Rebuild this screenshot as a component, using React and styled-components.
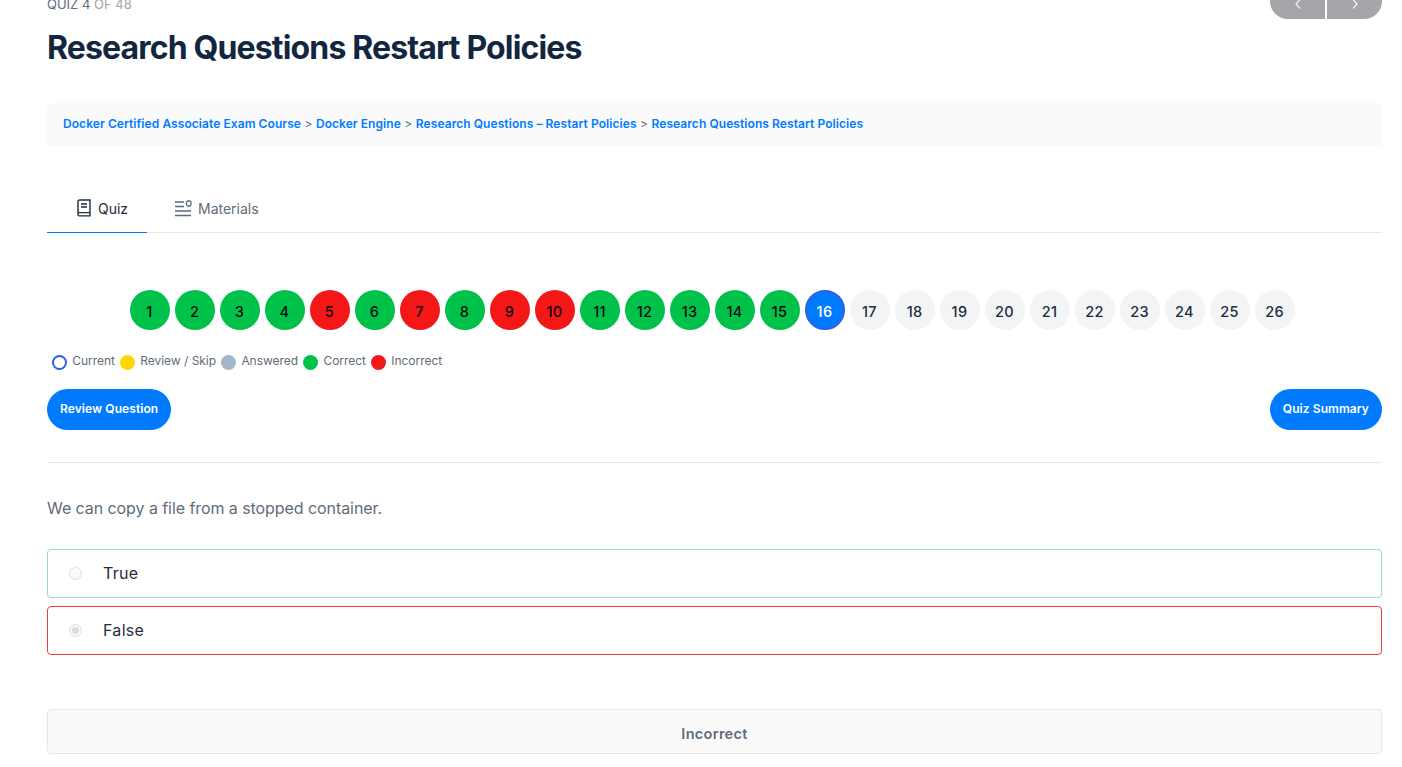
import React from "react";
import styled, { createGlobalStyle } from "styled-components";

const GlobalStyle = createGlobalStyle`
  html, body {
    margin: 0;
    padding: 0;
    background: #fff;
    overflow: hidden;
    font-family: Inter, "Liberation Sans", sans-serif;
  }
  * {
    box-sizing: border-box;
  }
`;

const statusList = [
  "correct", "correct", "correct", "correct", "incorrect", "correct", "incorrect", "correct",
  "incorrect", "incorrect", "correct", "correct", "correct", "correct", "correct", "current",
  "none", "none", "none", "none", "none", "none", "none", "none", "none", "none",
];

const legend = [
  { kind: "current", label: "Current" },
  { kind: "review", label: "Review / Skip" },
  { kind: "answered", label: "Answered" },
  { kind: "correct", label: "Correct" },
  { kind: "incorrect", label: "Incorrect" },
];

const crumbs = [
  "Docker Certified Associate Exam Course",
  "Docker Engine",
  "Research Questions – Restart Policies",
  "Research Questions Restart Policies",
];

const BookIcon = () => (
  <svg width="16" height="18" viewBox="0 0 16 18" fill="none" stroke="#1f2d3d" strokeWidth="1.4">
    <path d="M2 14.5V2.6C2 1.700 2.700 1 3.600 1H14v12.600H3.400C2.600 13.600 2 14.200 2 15s.6 1.900 1.400 1.900H14v-3.300" />
    <path d="M5 5h6M5 8h6" />
  </svg>
);

const MaterialsIcon = () => (
  <svg width="18" height="17" viewBox="0 0 18 17" fill="none" stroke="#5a6778" strokeWidth="1.3">
    <path d="M1 2h9M1 6.500h9M1 11h16M1 15.500h16" />
    <rect x="12.500" y="1" width="4.500" height="5" rx="1.500" />
  </svg>
);

const Chevron = ({ d }) => (
  <svg width="6" height="10" viewBox="0 0 6 10" fill="none" stroke="#f0f4fa" strokeWidth="1.2">
    <path d={d} />
  </svg>
);

const App = () => {
  return (
    <Page>
      <GlobalStyle />
      <Header>
        <QuizCount>
          QUIZ 4 <span>OF 48</span>
        </QuizCount>
        <NavGroup>
          <NavButton $side="left">
            <Chevron d="M5 0.500 1 5l4 4.500" />
          </NavButton>
          <NavButton $side="right">
            <Chevron d="M1 0.500 5 5 1 9.500" />
          </NavButton>
        </NavGroup>
      </Header>
      <Title>Research Questions Restart Policies</Title>

      <Breadcrumb>
        {crumbs.map((crumb, i) => (
          <React.Fragment key={crumb}>
            {i > 0 && <Sep> &gt; </Sep>}
            <Crumb>{crumb}</Crumb>
          </React.Fragment>
        ))}
      </Breadcrumb>

      <Tabs>
        <Tab $active>
          <BookIcon />
          Quiz
        </Tab>
        <Tab>
          <MaterialsIcon />
          Materials
        </Tab>
      </Tabs>

      <Numbers>
        {statusList.map((status, i) => (
          <NumberDot key={i} $status={status}>
            {i + 1}
          </NumberDot>
        ))}
      </Numbers>

      <Legend>
        {legend.map((item) => (
          <LegendItem key={item.kind}>
            <LegendDot $kind={item.kind} />
            <LegendLabel>{item.label}</LegendLabel>
          </LegendItem>
        ))}
      </Legend>

      <Actions>
        <PillButton>Review Question</PillButton>
        <PillButton>Quiz Summary</PillButton>
      </Actions>

      <Divider />

      <Question>We can copy a file from a stopped container.</Question>

      <Option $state="right">
        <Radio />
        True
      </Option>
      <Option $state="wrong">
        <Radio $checked />
        False
      </Option>

      <Result>Incorrect</Result>
    </Page>
  );
};

export default App;

const Page = styled.div`
  margin-top: -20px;
  padding: 0 20px 0 47px;
  width: 1402px;
`;

const Header = styled.div`
  display: flex;
  justify-content: space-between;
  align-items: flex-start;
  height: 39px;
`;

const QuizCount = styled.div`
  margin-top: 16px;
  font-size: 13px;
  line-height: 16px;
  color: #5f6b7a;

  span {
    color: #a5a6a9;
  }
`;

const NavGroup = styled.div`
  display: flex;
  gap: 2px;
`;

const NavButton = styled.div`
  width: 55px;
  height: 39px;
  padding-top: 19px;
  display: flex;
  justify-content: center;
  background: #a5a6a9;
  border-radius: ${(p) => (p.$side === "left" ? "0 0 0 18px" : "0 0 18px 0")};
`;

const Title = styled.h1`
  margin: 9px 0 0;
  font-size: 32px;
  line-height: 40px;
  font-weight: 700;
  letter-spacing: -0.85px;
  color: #12273f;
`;

const Breadcrumb = styled.div`
  margin-top: 35px;
  height: 43px;
  padding: 0 16px 2px;
  display: flex;
  align-items: center;
  white-space: pre;
  background: #fafafa;
  border-radius: 4px;
  font-size: 12px;
  letter-spacing: 0.07px;
`;

const Crumb = styled.span`
  color: #007bff;
  font-weight: 600;
`;

const Sep = styled.span`
  color: #5f6b7a;
`;

const Tabs = styled.div`
  margin-top: 40px;
  display: flex;
  height: 47px;
  border-bottom: 1px solid #e6e8eb;
`;

const Tab = styled.div`
  display: flex;
  align-items: center;
  gap: 6px;
  width: ${(p) => (p.$active ? "100px" : "auto")};
  padding: ${(p) => (p.$active ? "0 0 2px 29px" : "0 0 2px 27px")};
  height: 47px;
  font-size: 14px;
  color: ${(p) => (p.$active ? "#1f2d3d" : "#5f6b7a")};
  border-bottom: ${(p) => (p.$active ? "1px solid #007bff" : "none")};
`;

const dotColors = {
  correct: "#00c24b",
  incorrect: "#f31717",
  current: "#007bff",
  none: "#f3f4f6",
};

const Numbers = styled.div`
  margin-top: 57px;
  display: flex;
  justify-content: center;
  gap: 5px;
  padding-right: 5px;
`;

const NumberDot = styled.div`
  width: 40px;
  height: 40px;
  padding-top: 2px;
  border-radius: 50%;
  display: flex;
  align-items: center;
  justify-content: center;
  font-size: 14.5px;
  font-weight: 500;
  letter-spacing: 0.3px;
  background: ${(p) => dotColors[p.$status]};
  color: ${(p) =>
    p.$status === "current" ? "#fff" : p.$status === "none" ? "#1f2d3d" : "#0b0b0b"};
  border: ${(p) => (p.$status === "current" ? "2px solid #2f5fe8" : "none")};
`;

const legendColors = {
  review: "#ffd600",
  answered: "#a3b5c9",
  correct: "#00c24b",
  incorrect: "#f31717",
};

const Legend = styled.div`
  margin-top: 23px;
  padding-left: 5px;
  display: flex;
  height: 18px;
  gap: 5px;
`;

const LegendItem = styled.div`
  display: flex;
  gap: 5.3px;
`;

const LegendDot = styled.span`
  width: 15px;
  height: 15px;
  margin-top: 2px;
  border-radius: 50%;
  background: ${(p) => legendColors[p.$kind] || "#fff"};
  border: ${(p) => (p.$kind === "current" ? "2px solid #2f5fe8" : "none")};
`;

const LegendLabel = styled.span`
  font-size: 12px;
  line-height: 16px;
  letter-spacing: -0.03px;
  color: #5f6b7a;
`;

const Actions = styled.div`
  margin-top: 18px;
  display: flex;
  justify-content: space-between;
`;

const PillButton = styled.div`
  height: 41px;
  padding: 0 13px 2px;
  display: flex;
  align-items: center;
  background: #007bff;
  border-radius: 21px;
  color: #fff;
  font-size: 12px;
  font-weight: 600;
  letter-spacing: 0.08px;
`;

const Divider = styled.div`
  margin-top: 32px;
  height: 1px;
  background: #e6e8eb;
`;

const Question = styled.p`
  margin: 35px 0 0;
  font-size: 16px;
  line-height: 21px;
  letter-spacing: -0.07px;
  color: #5f6b7a;
`;

const Option = styled.div`
  margin-top: ${(p) => (p.$state === "right" ? "30px" : "8px")};
  height: 49px;
  padding: 0 0 2px 21px;
  display: flex;
  align-items: center;
  gap: 21px;
  border: 1px solid ${(p) => (p.$state === "right" ? "#9fd7c0" : "#ee3a46")};
  border-radius: 4px;
  font-size: 16px;
  letter-spacing: 0.3px;
  color: #1f2d3d;
`;

const Radio = styled.span`
  position: relative;
  width: 13px;
  height: 13px;
  margin-top: 2px;
  border-radius: 50%;
  border: 1px solid #dedede;
  background: #fafafa;

  &::after {
    content: "";
    display: ${(p) => (p.$checked ? "block" : "none")};
    position: absolute;
    inset: 2px;
    border-radius: 50%;
    background: #dcdcdc;
  }
`;

const Result = styled.div`
  margin-top: 54px;
  height: 45px;
  padding-top: 4px;
  display: flex;
  align-items: center;
  justify-content: center;
  background: #fafafa;
  border: 1px solid #e8e8e8;
  border-radius: 4px;
  font-size: 14.5px;
  font-weight: 600;
  letter-spacing: 0.3px;
  color: #5f6b7a;
`;
